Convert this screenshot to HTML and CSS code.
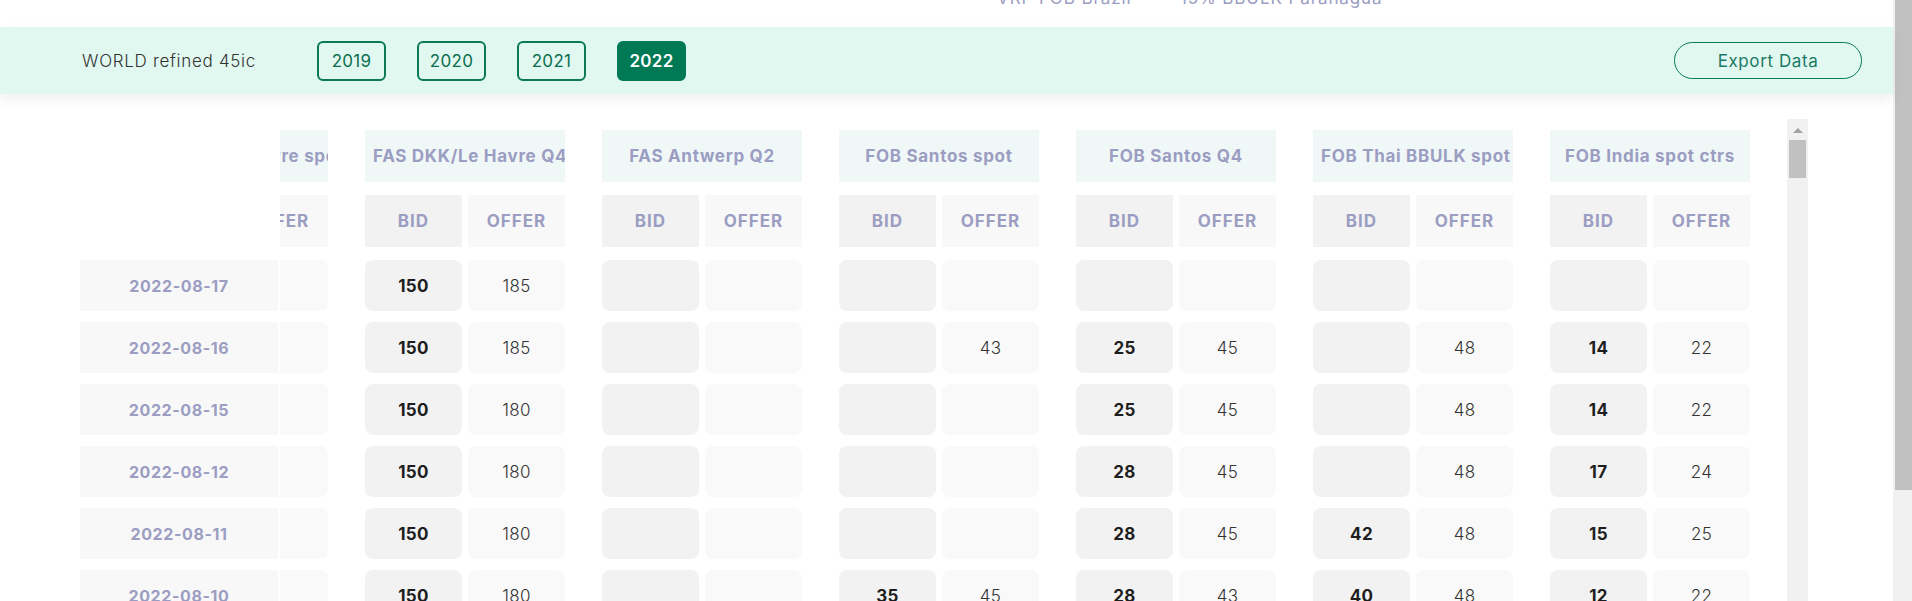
FILE: index.html
```html
<!DOCTYPE html>
<html lang="en">
<head>
<meta charset="utf-8">
<title>WORLD refined 45ic</title>
<link rel="stylesheet" href="styles.css">
</head>
<body>
<div class="app">
  <div class="page">
    <div class="topstrip">
      <div class="toplabels">
        <span class="tl tl1">VRP FOB Brazil</span>
        <span class="tl tl2">15% BBULK Paranagua</span>
      </div>
    </div>

    <div class="toolbar">
      <span class="title">WORLD refined 45ic</span>
      <div class="years">
        <button class="year">2019</button>
        <button class="year">2020</button>
        <button class="year">2021</button>
        <button class="year active">2022</button>
      </div>
      <button class="export">Export Data</button>
    </div>

    <div class="content">
      <div class="viewport">
        <div class="row head">
          <div class="datecell blank"></div>
          <div class="clip"><div class="track">
            <div class="group"><div class="gh">FAS DKK/Le Havre spot</div></div>
            <div class="group"><div class="gh">FAS DKK/Le Havre Q4</div></div>
            <div class="group"><div class="gh">FAS Antwerp Q2</div></div>
            <div class="group"><div class="gh">FOB Santos spot</div></div>
            <div class="group"><div class="gh">FOB Santos Q4</div></div>
            <div class="group"><div class="gh">FOB Thai BBULK spot</div></div>
            <div class="group"><div class="gh">FOB India spot ctrs</div></div>
          </div></div>
        </div>

        <div class="row sub">
          <div class="datecell blank"></div>
          <div class="clip"><div class="track">
            <div class="group"><div class="sh bid">BID</div><div class="sh offer">OFFER</div></div>
            <div class="group"><div class="sh bid">BID</div><div class="sh offer">OFFER</div></div>
            <div class="group"><div class="sh bid">BID</div><div class="sh offer">OFFER</div></div>
            <div class="group"><div class="sh bid">BID</div><div class="sh offer">OFFER</div></div>
            <div class="group"><div class="sh bid">BID</div><div class="sh offer">OFFER</div></div>
            <div class="group"><div class="sh bid">BID</div><div class="sh offer">OFFER</div></div>
            <div class="group"><div class="sh bid">BID</div><div class="sh offer">OFFER</div></div>
          </div></div>
        </div>

        <div class="row data">
          <div class="datecell">2022-08-17</div>
          <div class="clip"><div class="track">
            <div class="group"><div class="c bid"></div><div class="c offer"></div></div>
            <div class="group"><div class="c bid">150</div><div class="c offer">185</div></div>
            <div class="group"><div class="c bid"></div><div class="c offer"></div></div>
            <div class="group"><div class="c bid"></div><div class="c offer"></div></div>
            <div class="group"><div class="c bid"></div><div class="c offer"></div></div>
            <div class="group"><div class="c bid"></div><div class="c offer"></div></div>
            <div class="group"><div class="c bid"></div><div class="c offer"></div></div>
          </div></div>
        </div>

        <div class="row data">
          <div class="datecell">2022-08-16</div>
          <div class="clip"><div class="track">
            <div class="group"><div class="c bid"></div><div class="c offer"></div></div>
            <div class="group"><div class="c bid">150</div><div class="c offer">185</div></div>
            <div class="group"><div class="c bid"></div><div class="c offer"></div></div>
            <div class="group"><div class="c bid"></div><div class="c offer">43</div></div>
            <div class="group"><div class="c bid">25</div><div class="c offer">45</div></div>
            <div class="group"><div class="c bid"></div><div class="c offer">48</div></div>
            <div class="group"><div class="c bid">14</div><div class="c offer">22</div></div>
          </div></div>
        </div>

        <div class="row data">
          <div class="datecell">2022-08-15</div>
          <div class="clip"><div class="track">
            <div class="group"><div class="c bid"></div><div class="c offer"></div></div>
            <div class="group"><div class="c bid">150</div><div class="c offer">180</div></div>
            <div class="group"><div class="c bid"></div><div class="c offer"></div></div>
            <div class="group"><div class="c bid"></div><div class="c offer"></div></div>
            <div class="group"><div class="c bid">25</div><div class="c offer">45</div></div>
            <div class="group"><div class="c bid"></div><div class="c offer">48</div></div>
            <div class="group"><div class="c bid">14</div><div class="c offer">22</div></div>
          </div></div>
        </div>

        <div class="row data">
          <div class="datecell">2022-08-12</div>
          <div class="clip"><div class="track">
            <div class="group"><div class="c bid"></div><div class="c offer"></div></div>
            <div class="group"><div class="c bid">150</div><div class="c offer">180</div></div>
            <div class="group"><div class="c bid"></div><div class="c offer"></div></div>
            <div class="group"><div class="c bid"></div><div class="c offer"></div></div>
            <div class="group"><div class="c bid">28</div><div class="c offer">45</div></div>
            <div class="group"><div class="c bid"></div><div class="c offer">48</div></div>
            <div class="group"><div class="c bid">17</div><div class="c offer">24</div></div>
          </div></div>
        </div>

        <div class="row data">
          <div class="datecell">2022-08-11</div>
          <div class="clip"><div class="track">
            <div class="group"><div class="c bid"></div><div class="c offer"></div></div>
            <div class="group"><div class="c bid">150</div><div class="c offer">180</div></div>
            <div class="group"><div class="c bid"></div><div class="c offer"></div></div>
            <div class="group"><div class="c bid"></div><div class="c offer"></div></div>
            <div class="group"><div class="c bid">28</div><div class="c offer">45</div></div>
            <div class="group"><div class="c bid">42</div><div class="c offer">48</div></div>
            <div class="group"><div class="c bid">15</div><div class="c offer">25</div></div>
          </div></div>
        </div>

        <div class="row data">
          <div class="datecell">2022-08-10</div>
          <div class="clip"><div class="track">
            <div class="group"><div class="c bid"></div><div class="c offer"></div></div>
            <div class="group"><div class="c bid">150</div><div class="c offer">180</div></div>
            <div class="group"><div class="c bid"></div><div class="c offer"></div></div>
            <div class="group"><div class="c bid">35</div><div class="c offer">45</div></div>
            <div class="group"><div class="c bid">28</div><div class="c offer">43</div></div>
            <div class="group"><div class="c bid">40</div><div class="c offer">48</div></div>
            <div class="group"><div class="c bid">12</div><div class="c offer">22</div></div>
          </div></div>
        </div>
      </div>

      <div class="vscroll">
        <div class="varrow"></div>
        <div class="vthumb"></div>
      </div>
    </div>
  </div>

  <div class="pscroll"><div class="pthumb"></div></div>
</div>
</body>
</html>
```

FILE: styles.css
```css
html, body {
  margin: 0;
  padding: 0;
  height: 601px;
  overflow: hidden;
  background: #ffffff;
  font-family: Inter, "Liberation Sans", sans-serif;
}

.app {
  display: flex;
  height: 601px;
}

.page {
  width: 1893px;
  flex: none;
  display: flex;
  flex-direction: column;
}

/* cut-off labels at the very top */
.topstrip {
  height: 27px;
  overflow: hidden;
  flex: none;
}
.toplabels {
  display: flex;
  padding-left: 997px;
  margin-top: -12px;
  line-height: 20px;
  font-size: 17px;
  color: #9b9dc2;
  letter-spacing: 0.9px;
  white-space: nowrap;
}
.tl1 { width: 183px; }

/* toolbar band */
.toolbar {
  height: 67px;
  flex: none;
  background: #e1f8f0;
  box-shadow: 0 5px 12px rgba(0, 0, 0, 0.07);
  display: flex;
  align-items: center;
  padding-left: 82px;
  position: relative;
  z-index: 1;
}
.title {
  width: 235px;
  font-size: 17px;
  font-weight: 300;
  color: #333333;
  letter-spacing: 0.7px;
}
.years {
  display: flex;
  gap: 31px;
}
.year {
  height: 40px;
  width: 69px;
  border: 2px solid #0a7a56;
  border-radius: 6px;
  background: transparent;
  color: #0d6e50;
  font-family: inherit;
  font-size: 17px;
  font-weight: 400;
  letter-spacing: 0.3px;
  padding: 0;
}
.year.active {
  background: #007a55;
  border-color: #007a55;
  color: #ffffff;
  font-weight: 600;
}
.export {
  margin-left: auto;
  margin-right: 31px;
  width: 188px;
  height: 37px;
  border: 1.5px solid #0a7a5a;
  border-radius: 19px;
  background: transparent;
  color: #1b7a66;
  font-family: inherit;
  font-size: 17px;
  font-weight: 400;
  letter-spacing: 0.6px;
  padding: 0;
}

/* table area */
.content {
  margin-top: 25px;
  display: flex;
  flex: 1;
  min-height: 0;
}
.viewport {
  margin-left: 80px;
  width: 1707px;
  padding-top: 11px;
  overflow: hidden;
}
.row {
  display: flex;
  gap: 2px;
}
.row.head, .row.sub { margin-bottom: 13px; }
.row.data { margin-bottom: 11px; }

.datecell {
  width: 198px;
  flex: none;
  height: 51px;
  background: #f8f8f8;
  display: flex;
  align-items: center;
  justify-content: center;
  font-size: 16px;
  font-weight: 700;
  color: #9b9dc2;
  letter-spacing: 0.6px;
}
.datecell.blank {
  background: transparent;
  height: 52px;
}

.clip {
  flex: 1;
  min-width: 0;
  overflow: hidden;
}
.track {
  display: flex;
  gap: 37px;
  margin-left: -152px;
  width: max-content;
}
.group {
  width: 200px;
  display: flex;
  gap: 6px;
}

.gh {
  width: 200px;
  height: 52px;
  box-sizing: border-box;
  padding: 0 8px;
  background: #f0f7f7;
  line-height: 52px;
  text-align: center;
  white-space: nowrap;
  overflow: hidden;
  font-size: 17px;
  font-weight: 700;
  color: #9b9dc2;
  letter-spacing: 0.7px;
}

.sh {
  width: 97px;
  height: 52px;
  display: flex;
  align-items: center;
  justify-content: center;
  font-size: 17px;
  font-weight: 700;
  color: #9b9dc2;
  letter-spacing: 1px;
}
.sh.bid { background: #f2f2f2; }
.sh.offer { background: #f8f8f8; }

.c {
  width: 97px;
  height: 51px;
  border-radius: 8px;
  display: flex;
  align-items: center;
  justify-content: center;
  font-size: 17px;
  letter-spacing: 0.3px;
}
.c.bid {
  background: #f2f2f2;
  font-weight: 700;
  color: #1e1e1e;
}
.c.offer {
  background: #f9f9f9;
  font-weight: 300;
  color: #333333;
}

/* inner vertical scrollbar */
.vscroll {
  width: 21px;
  flex: none;
  background: #f1f1f1;
  display: flex;
  flex-direction: column;
  align-items: center;
}
.varrow {
  margin-top: 9px;
  width: 0;
  height: 0;
  border-left: 5px solid transparent;
  border-right: 5px solid transparent;
  border-bottom: 5px solid #a3a3a3;
}
.vthumb {
  margin-top: 7px;
  width: 17px;
  height: 38px;
  background: #c1c1c1;
}

/* page scrollbar */
.pscroll {
  width: 19px;
  flex: none;
  background: #f1f1f1;
}
.pthumb {
  margin-left: 2px;
  width: 17px;
  height: 490px;
  background: #c1c1c1;
}
```
